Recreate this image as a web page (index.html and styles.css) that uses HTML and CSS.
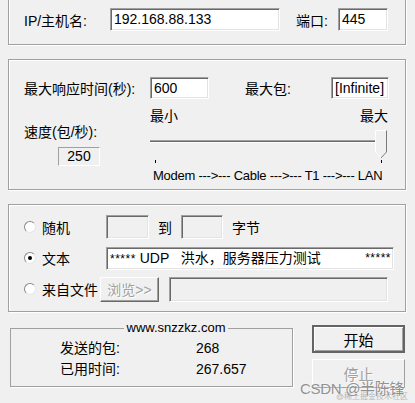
FILE: index.html
```html
<!DOCTYPE html>
<html lang="zh-CN">
<head>
    <meta charset="UTF-8">
    <meta name="viewport" content="width=device-width, initial-scale=1.0">
    <title>UDP Flooder</title>
    <link rel="stylesheet" href="styles.css">
</head>

<body>
    <div class="window">
        <!-- target -->
        <div class="group group-host">
            <div class="row">
                <span class="label host-label">IP/主机名:</span>
                <div class="field host-field">192.168.88.133</div>
                <span class="label port-label">端口:</span>
                <div class="field port-field">445</div>
            </div>
        </div>

        <!-- speed -->
        <div class="group group-speed">
            <div class="row">
                <span class="label timeout-label">最大响应时间(秒):</span>
                <div class="field timeout-field">600</div>
                <span class="label max-label">最大包:</span>
                <div class="field max-field">[Infinite]</div>
            </div>
            <div class="speed">
                <div class="speed-left">
                    <div class="speed-label">速度(包/秒):</div>
                    <div class="static speed-value">250</div>
                </div>
                <div class="speed-right">
                    <div class="scale">
                        <span>最小</span>
                        <span>最大</span>
                    </div>
                    <svg class="slider" width="240" height="40" viewBox="0 0 240 40">
                        <line x1="0" y1="16.5" x2="229" y2="16.5" stroke="#a0a0a0" stroke-width="1"/>
                        <line x1="0" y1="17.5" x2="229" y2="17.5" stroke="#696969" stroke-width="1"/>
                        <line x1="0" y1="18.5" x2="229" y2="18.5" stroke="#ffffff" stroke-width="1"/>
                        <path d="M225.5 6.5 H236.5 V28 L231 34 L225.5 28 Z" fill="#f0f0f0" stroke="#ffffff"/>
                        <path d="M236.5 6.5 V28 L231 34" fill="none" stroke="#7a7a7a"/>
                        <line x1="5.5" y1="36" x2="5.5" y2="39" stroke="#000"/>
                        <line x1="231.5" y1="36" x2="231.5" y2="39" stroke="#000"/>
                    </svg>
                    <div class="modes">Modem ---&gt;--- Cable ---&gt;--- T1 ---&gt;--- LAN</div>
                </div>
            </div>
        </div>

        <!-- payload -->
        <div class="group group-data">
            <div class="row data-row">
                <span class="radio"></span>
                <span class="label choice">随机</span>
                <div class="field off size-from"></div>
                <span class="label to">到</span>
                <div class="field off size-to"></div>
                <span class="label bytes">字节</span>
            </div>
            <div class="row data-row">
                <span class="radio checked"></span>
                <span class="label choice">文本</span>
                <div class="field text-field"><span class="stars">*****</span> UDP   洪水，服务器压力测试        <span class="stars">*****</span></div>
            </div>
            <div class="row data-row">
                <span class="radio"></span>
                <span class="label choice">来自文件</span>
                <button class="btn browse" disabled>浏览&gt;&gt;</button>
                <div class="field off file-field"></div>
            </div>
        </div>

        <!-- status -->
        <div class="bottom">
            <fieldset class="stats">
                <legend>www.snzzkz.com</legend>
                <div class="stats-grid">
                    <span>发送的包:</span>
                    <span>268</span>
                    <span>已用时间:</span>
                    <span>267.657</span>
                </div>
            </fieldset>
            <div class="actions">
                <button class="btn start">开始</button>
                <button class="btn stop" disabled>停止</button>
            </div>
        </div>
    </div>

    <div class="watermark">CSDN @半陈锋</div>
    <div class="watermark-small">@稀土掘金技术社区</div>
</body>
</html>
```

FILE: styles.css
```css
body {
    margin: 0;
    padding: 0;
    width: 415px;
    height: 403px;
    overflow: hidden;
    position: relative;
    background-color: #f0f0f0;
    color: #000;
    font-family: "Liberation Sans", "Noto Sans CJK SC", sans-serif;
    font-size: 14px;
}

.window {
    padding: 0 9px 0 8px;
}

.group {
    border: 1px solid #a0a0a0;
    box-shadow: inset 1px 1px 0 #fff, 1px 1px 0 #fff;
    padding-left: 15px;
}

.row {
    display: flex;
    align-items: center;
}

.label {
    white-space: nowrap;
}

.field {
    box-sizing: border-box;
    height: 23px;
    line-height: 21px;
    padding-left: 3px;
    background-color: #fff;
    border: 1px solid;
    border-color: #a0a0a0 #fff #fff #a0a0a0;
    box-shadow: inset 1px 1px 0 #696969, inset -1px -1px 0 #e3e3e3;
    white-space: pre;
    overflow: hidden;
}
.field.off {
    background-color: #f0f0f0;
}

/* target */
.group-host {
    margin-top: -13px;
    padding-top: 20px;
    padding-bottom: 13px;
}
.host-label { width: 86px; }
.host-field { width: 170px; }
.port-label { width: 42px; margin-left: 16px; }
.port-field { width: 50px; }

/* speed */
.group-speed {
    margin-top: 14px;
    padding-top: 17px;
    padding-bottom: 5px;
}
.group-speed .field {
    height: 22px;
    line-height: 20px;
}
.timeout-label { width: 126px; }
.timeout-field { width: 59px; }
.max-label { width: 86px; margin-left: 36px; }
.max-field { width: 58px; }

.speed {
    display: grid;
    grid-template-columns: 126px 240px;
}
.speed-label {
    margin-top: 25px;
    line-height: 16px;
}
.static {
    box-sizing: border-box;
    border: 1px solid;
    border-color: #a0a0a0 #fff #fff #a0a0a0;
}
.speed-value {
    width: 42px;
    height: 19px;
    line-height: 17px;
    margin: 7px 0 0 34px;
    text-align: center;
}
.scale {
    display: flex;
    justify-content: space-between;
    width: 238px;
    margin-top: 9px;
    line-height: 16px;
}
.slider {
    display: block;
}
.modes {
    margin-top: 4px;
    padding-left: 3px;
    line-height: 16px;
    font-size: 13px;
    letter-spacing: -0.25px;
    white-space: nowrap;
}

/* payload */
.group-data {
    margin-top: 14px;
    padding-top: 10px;
    padding-bottom: 10px;
}
.data-row {
    height: 24px;
}
.data-row + .data-row {
    margin-top: 7px;
}
.radio {
    box-sizing: border-box;
    width: 12px;
    height: 12px;
    border-radius: 50%;
    background-color: #fff;
    border: 1px solid;
    border-color: #8a8a8a #e6e6e6 #e6e6e6 #8a8a8a;
    position: relative;
}
.radio.checked::after {
    content: "";
    position: absolute;
    left: 3px;
    top: 3px;
    width: 4px;
    height: 4px;
    border-radius: 50%;
    background-color: #000;
}
.choice {
    margin-left: 6px;
    width: 64px;
}
.size-from { width: 43px; height: 24px; }
.to { margin-left: 9px; width: 23px; }
.size-to { width: 42px; height: 24px; }
.bytes { margin-left: 9px; }
.text-field {
    width: 288px;
}
.stars {
    font-size: 12px;
    letter-spacing: 0.5px;
}
.stars:last-child {
    float: right;
    padding-right: 2px;
}

.btn {
    box-sizing: border-box;
    font-family: inherit;
    font-size: 14px;
    background-color: #f0f0f0;
    border: 1px solid;
    border-color: #fff #696969 #696969 #fff;
    box-shadow: inset -1px -1px 0 #a0a0a0;
    padding: 0;
}
.browse {
    width: 59px;
    height: 25px;
    margin-left: -6px;
    color: #a0a0a0;
    text-shadow: 1px 1px 0 #fff;
}
.file-field {
    width: 219px;
    height: 25px;
    margin-left: 10px;
}

/* status */
.bottom {
    display: flex;
    align-items: flex-start;
    margin-top: 8px;
}
.stats {
    box-sizing: border-box;
    width: 283px;
    margin: 0 0 0 2px;
    padding: 0 0 6px 49px;
    border: 1px solid #a0a0a0;
    box-shadow: 1px 1px 0 #fff;
}
.stats legend {
    margin: 0 auto;
    padding: 0 3px;
    font-size: 13px;
    line-height: 16px;
}
.stats-grid {
    display: grid;
    grid-template-columns: 136px auto;
    margin-top: 2px;
    line-height: 21px;
}
.actions {
    display: flex;
    flex-direction: column;
    gap: 6px;
    margin: 5px 0 0 19px;
}
.start {
    width: 93px;
    height: 28px;
    font-size: 15px;
    border: 2px solid #646464;
    box-shadow: inset 1px 1px 0 #fff, inset -1px -1px 0 #a0a0a0;
}
.stop {
    width: 93px;
    height: 29px;
    font-size: 15px;
    color: #a0a0a0;
    text-shadow: 1px 1px 0 #fff;
    border-color: #fff #a0a0a0 #a0a0a0 #fff;
    box-shadow: none;
}

.watermark {
    position: absolute;
    left: 300px;
    top: 377px;
    font-size: 15px;
    letter-spacing: -0.3px;
    color: rgba(110, 110, 110, 0.75);
    text-shadow: 0 0 2px #fff;
    white-space: nowrap;
}
.watermark-small {
    position: absolute;
    left: 336px;
    top: 392px;
    font-size: 8px;
    line-height: 10px;
    color: rgba(140, 140, 140, 0.6);
    white-space: nowrap;
}
```
